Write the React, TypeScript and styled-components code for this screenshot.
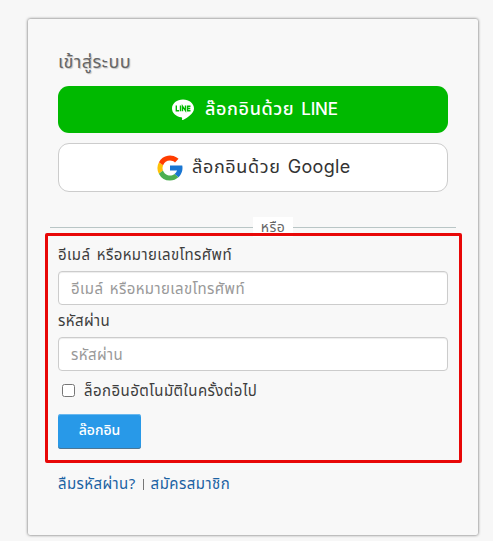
import React from "react";
import styled, { createGlobalStyle } from "styled-components";

const GlobalStyle = createGlobalStyle`
  *, *::before, *::after { box-sizing: border-box; }
  body {
    margin: 0;
    background: #f7f7f7;
    color: #3d3d3d;
    font-family: "Noto Sans", "Noto Sans Thai", Prompt, Kanit, sans-serif;
    font-size: 15px;
  }
`;

const Page = styled.main`
  height: 541px;
  padding: 19px 15px 0 28px;
  overflow: hidden;
`;

const Card = styled.section`
  display: flex;
  flex-direction: column;
  width: 450px;
  height: 516px;
  padding: 28px 30px 0;
  background: #f8f8f8;
  border-radius: 2px;
  box-shadow: 0 0 3px rgba(0, 0, 0, 0.65);
`;

const Text = styled.span<{ $spacing?: number; $word?: number }>`
  white-space: nowrap;
  letter-spacing: ${(p) => p.$spacing ?? 0}px;
  word-spacing: ${(p) => p.$word ?? 0}px;
`;

const BrandName = styled.span<{ $size: number; $spacing: number }>`
  margin-left: 7px;
  font-family: Inter, "Liberation Sans", sans-serif;
  font-size: ${(p) => p.$size}px;
  letter-spacing: ${(p) => p.$spacing}px;
`;

const Heading = styled.h1`
  height: 39px;
  margin: 0;
  font-size: 18px;
  font-weight: 400;
  line-height: 29px;
  color: #666;
  text-shadow: 1px 1px 1px rgba(0, 0, 0, 0.22);
`;

const SocialButton = styled.button<{ $brand: "line" | "google" }>`
  display: flex;
  align-items: center;
  flex: none;
  height: ${(p) => (p.$brand === "line" ? 47 : 49)}px;
  padding: 0 0 0 ${(p) => (p.$brand === "line" ? 113 : 96)}px;
  gap: ${(p) => (p.$brand === "line" ? 10 : 7)}px;
  border: ${(p) => (p.$brand === "line" ? "0" : "1px solid #ccc")};
  border-radius: 11px;
  background: ${(p) => (p.$brand === "line" ? "#00b900" : "#fff")};
  color: ${(p) => (p.$brand === "line" ? "#fff" : "#333")};
  font-family: inherit;
  font-size: 18px;
  font-weight: ${(p) => (p.$brand === "line" ? 500 : 400)};

  & + & { margin-top: 10px; }
`;

const Divider = styled.div`
  display: flex;
  align-items: center;
  flex: none;
  height: 20px;
  margin: 25px -8px 0;
  color: #666;

  &::before, &::after {
    content: "";
    flex: 1;
    height: 1px;
    background: #b9c6c6;
  }
  &::after { flex: 0 0 163px; }
`;

const DividerLabel = styled.div`
  width: 40px;
  height: 20px;
  background: #fff;
  text-align: center;
  font-size: 14px;
  line-height: 20px;
`;

const Highlight = styled.form`
  position: relative;
  flex: none;
  height: 230px;
  margin: -4px -14px 0 -13px;
  padding: 6px 11px 0 10px;
  border: 3px solid #e80808;
  border-radius: 2px;
`;

const FieldLabel = styled.label`
  display: block;
  height: 29px;
  line-height: 24px;
  font-size: 15px;
`;

const Field = styled.input<{ $spacing: number }>`
  display: block;
  width: 390px;
  height: 34px;
  margin-bottom: 3px;
  padding: 0 12px 1px;
  border: 1px solid #ccc;
  border-radius: 4px;
  background: #fff;
  box-shadow: inset 0 1px 1px rgba(0, 0, 0, 0.075);
  font-family: inherit;
  font-size: 15px;
  letter-spacing: ${(p) => p.$spacing}px;
  word-spacing: 2px;

  &::placeholder { color: #999; opacity: 1; }
`;

const Remember = styled.label`
  display: flex;
  align-items: center;
  height: 34px;
  gap: 9px;
  padding-left: 4px;
`;

const Checkbox = styled.input`
  width: 13px;
  height: 13px;
  margin: 0 0 2px;
`;

const Submit = styled.button`
  display: flex;
  align-items: center;
  justify-content: center;
  width: 83px;
  height: 35px;
  margin-top: 6px;
  padding: 0 0 3px;
  border: 0;
  border-radius: 3px;
  background: #2899e8;
  box-shadow: inset 0 1px 0 #69b8ef, inset 0 -1px 0 #4c7694;
  color: #fff;
  font-family: inherit;
  font-size: 14px;
  font-weight: 500;
`;

const Links = styled.nav`
  display: flex;
  align-items: center;
  height: 24px;
  margin-top: 9px;
  gap: 7px;
`;

const Link = styled.a`
  color: #1b62a3;
  text-decoration: none;
`;

const Separator = styled.span`
  width: 1px;
  height: 11px;
  background: #777;
`;

const LineLogo = () => (
  <svg width="24" height="22" viewBox="0 0 24 22">
    <path fill="#fff" d="M12 .5C5.900.5 1 4.500 1 9.400c0 4.400 3.900 8.100 9.200 8.800 1.200.2 1 .8.800 2.100-.1.700.300.900.900.600C15.500 19.100 23 14.800 23 9.400 23 4.500 18.100.5 12 .5Z" />
    <path fill="none" stroke="#00b900" strokeWidth="1.400" d="M5.300 6.500v5.200h2.800M9.500 6.500v5.800M11.500 12.300V7.300l3 4.300V6.500M19.500 7.200h-2.900v4.500h2.900M16.600 9.500h2.700" />
  </svg>
);

const GoogleLogo = () => (
  <svg width="30" height="30" viewBox="0 0 48 48">
    <path fill="#1976d2" d="M43.600 20.100H24v8h11.300a12 12 0 0 1-4.100 5.600l6.200 5.200C37 39.200 44 34 44 24c0-1.300-.1-2.600-.4-3.900Z" />
    <path fill="#ffc107" d="m6.300 14.700 6.600 4.800a12 12 0 0 0-.2 8.600l-6.500 5A20 20 0 0 1 6.300 14.700Z" />
    <path fill="#ff3d00" d="m6.300 14.700 6.600 4.800A12 12 0 0 1 24 12c3.100 0 5.800 1.200 8 3l5.700-5.700A20 20 0 0 0 6.300 14.700Z" />
    <path fill="#4caf50" d="M24 44c5.200 0 9.900-2 13.400-5.200l-6.200-5.200A12 12 0 0 1 12.700 28l-6.500 5A20 20 0 0 0 24 44Z" />
  </svg>
);

export default function App() {
  return (
    <>
      <GlobalStyle />
      <Page>
        <Card>
          <Heading><Text $spacing={0.5}>เข้าสู่ระบบ</Text></Heading>
          <SocialButton $brand="line" type="button">
            <LineLogo />
            <Text $spacing={0.6}>ล๊อกอินด้วย<BrandName $size={17} $spacing={-0.2}>LINE</BrandName></Text>
          </SocialButton>
          <SocialButton $brand="google" type="button">
            <GoogleLogo />
            <Text $spacing={0.65}>ล๊อกอินด้วย<BrandName $size={18} $spacing={0.35}>Google</BrandName></Text>
          </SocialButton>
          <Divider><DividerLabel><Text $spacing={0.4}>หรือ</Text></DividerLabel></Divider>
          <Highlight>
            <FieldLabel htmlFor="account"><Text $spacing={0.4} $word={2}>อีเมล์ หรือหมายเลขโทรศัพท์</Text></FieldLabel>
            <Field id="account" $spacing={0.4} placeholder="อีเมล์ หรือหมายเลขโทรศัพท์" />
            <FieldLabel htmlFor="password"><Text $spacing={0.4}>รหัสผ่าน</Text></FieldLabel>
            <Field id="password" type="password" $spacing={0.4} placeholder="รหัสผ่าน" />
            <Remember>
              <Checkbox type="checkbox" />
              <Text $spacing={0.45}>ล็อกอินอัตโนมัติในครั้งต่อไป</Text>
            </Remember>
            <Submit type="button"><Text>ล๊อกอิน</Text></Submit>
          </Highlight>
          <Links>
            <Link href="#"><Text $spacing={0.4}>ลืมรหัสผ่าน?</Text></Link>
            <Separator />
            <Link href="#"><Text $spacing={0.45}>สมัครสมาชิก</Text></Link>
          </Links>
        </Card>
      </Page>
    </>
  );
}
